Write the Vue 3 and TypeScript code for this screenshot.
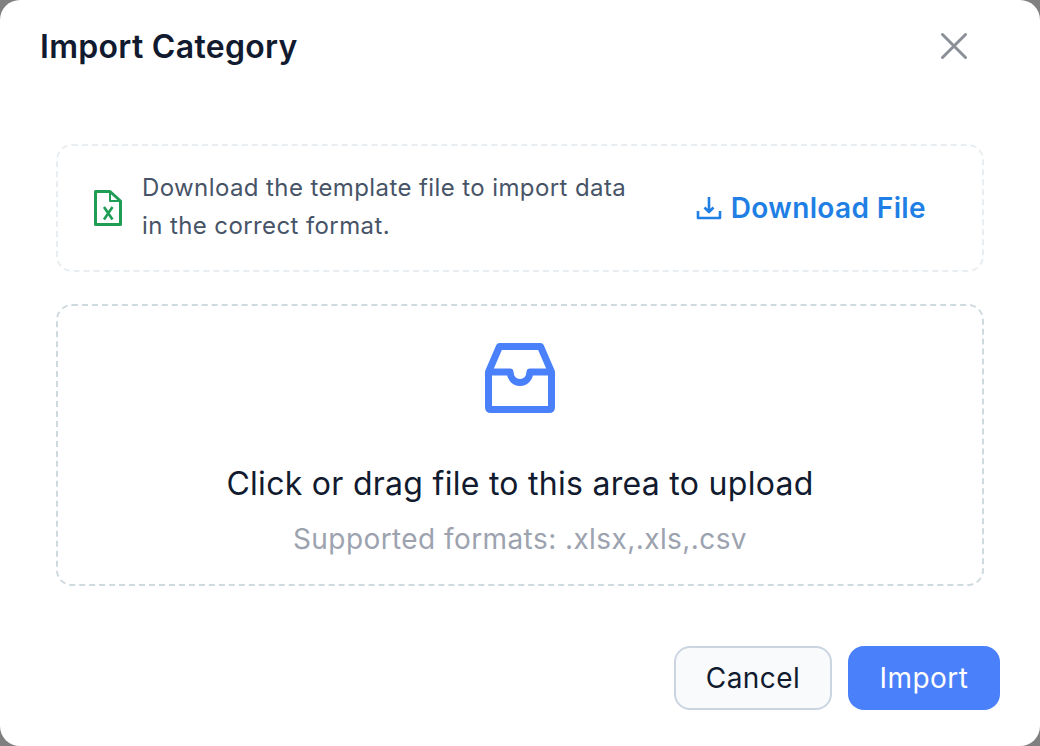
<script setup lang="ts">
const title = 'Import Category'
</script>

<template>
  <div class="modal">
    <header class="head">
      <h1>{{ title }}</h1>
      <svg class="close" width="28" height="28" viewBox="0 0 28 28" fill="none" stroke="#8a8f98" stroke-width="3" stroke-linecap="round">
        <path d="M2.5 2.5 L25.5 25.5 M25.5 2.5 L2.5 25.5" />
      </svg>
    </header>
    <div class="body">
      <section class="tpl">
        <svg class="xls" width="30" height="38" viewBox="0 0 30 38" fill="none" stroke="#1f9d55">
          <path d="M1.5 2.500H16L26.500 12V35.500H1.500z" stroke-width="3" stroke-linejoin="round" />
          <path d="M16 2.500V12H26.500" stroke-width="2" stroke-linejoin="round" />
          <path d="M10 18l8.500 12.500M18.500 18L10 30.500" stroke-width="2.600" />
        </svg>
        <p>Download the template file to import data<br />in the correct format.</p>
        <a class="dl">
          <svg width="26" height="24" viewBox="0 0 26 24" fill="none" stroke="#1f7fe5" stroke-width="2.600" stroke-linejoin="round">
            <path d="M13 1v15M8.500 11.500L13 16l4.500-4.500M2 15v7h22v-7" />
          </svg>
          Download File
        </a>
      </section>
      <section class="drop">
        <svg width="72" height="72" viewBox="0 0 72 72" fill="none" stroke="#4a80fa" stroke-width="7" stroke-linejoin="round">
          <path d="M4.500 30 L15.500 4.500 H56.500 L67.500 30 V65 Q67.500 67.500 65 67.500 H7 Q4.500 67.500 4.500 65 Z" />
          <path d="M4.500 30 H26 C27 44 45 44 46 30 H67.500" />
        </svg>
        <div class="main">Click or drag file to this area to upload</div>
        <div class="sub">Supported formats: .xlsx,.xls,.csv</div>
      </section>
    </div>
    <footer class="foot">
      <button class="btn cancel">Cancel</button>
      <button class="btn ok">Import</button>
    </footer>
  </div>
</template>

<style>
html, body { margin: 0; background: #808080; }
</style>

<style scoped>
.modal {
  width: 1040px;
  height: 746px;
  box-sizing: border-box;
  background: #fff;
  border-radius: 20px;
  font-family: Inter, "Liberation Sans", sans-serif;
  padding: 27px 40px 36px;
  display: flex;
  flex-direction: column;
}
.head {
  display: flex;
  justify-content: space-between;
  align-items: center;
  height: 38px;
}
h1 { margin: 0; font-size: 32px; font-weight: 600; letter-spacing: 0.3px; color: #111a2e; }
.close { margin-right: 32px; }
.body { padding: 79px 16px 0; display: flex; flex-direction: column; gap: 32px; flex: 1; }
.tpl {
  height: 128px;
  box-sizing: border-box;
  border: 2px dashed #e8edf1;
  border-radius: 16px;
  display: flex;
  align-items: center;
  padding: 0 56px 0 36px;
}
.xls { flex: none; }
.tpl p { margin: -2px 0 0 18px; flex: 1; font-size: 24px; line-height: 38px; letter-spacing: 0.4px; color: #475467; }
.dl { display: flex; align-items: center; gap: 9px; font-size: 28px; font-weight: 600; letter-spacing: 0.38px; color: #1f7fe5; }
.drop {
  height: 282px;
  box-sizing: border-box;
  border: 2px dashed #cfdadf;
  border-radius: 16px;
  display: flex;
  flex-direction: column;
  align-items: center;
  padding-top: 36px;
}
.main { margin-top: 50px; font-size: 32px; letter-spacing: 0.28px; color: #111a2e; }
.sub { margin-top: 19px; font-size: 28px; letter-spacing: 0.42px; color: #9ca3af; }
.foot { display: flex; justify-content: flex-end; gap: 16px; }
.btn { height: 64px; border-radius: 16px; font: 400 28px Inter, sans-serif; letter-spacing: 0.45px; box-sizing: border-box; }
.cancel { width: 158px; background: #f8fafc; border: 2px solid #cbd5e1; color: #111a2e; }
.ok { width: 152px; background: #4a80fa; border: 0; color: #fff; }
</style>
